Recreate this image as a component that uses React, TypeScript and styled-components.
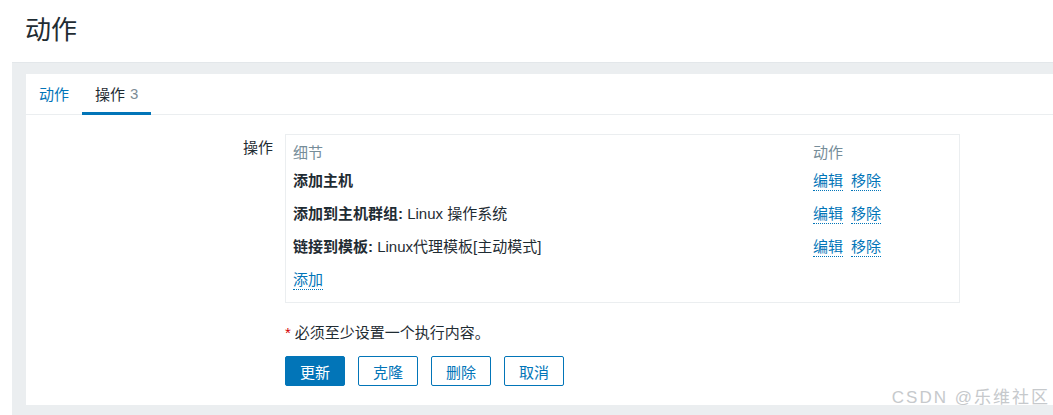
import React from "react";
import styled, { createGlobalStyle } from "styled-components";

const Global = createGlobalStyle`
  html, body { margin: 0; padding: 0; background: #ffffff; }
  body {
    font-family: "Liberation Sans", Arial, "Noto Sans CJK SC", sans-serif;
    color: #1f2c33;
    font-size: 15px;
    overflow: hidden;
  }
`;

const Page = styled.div`
  position: relative;
  width: 1053px;
  height: 415px;
  display: flex;
  flex-direction: column;
  overflow: hidden;
`;

const Header = styled.header`
  height: 62px;
  display: flex;
  align-items: center;
  padding-left: 25px;
  box-sizing: border-box;
`;

const Title = styled.h1`
  margin: 0;
  font-size: 26px;
  font-weight: normal;
  line-height: 30px;
  color: #1f2c33;
  padding-bottom: 2px;
`;

const Wrapper = styled.main`
  flex: 1;
  margin-left: 12px;
  background: #ebeef0;
  border-top: 1px solid #e3e7ea;
  padding: 11px 0 10px 14px;
  display: flex;
`;

const Card = styled.section`
  flex: 1;
  background: #ffffff;
  display: flex;
  flex-direction: column;
`;

const Tabs = styled.nav`
  display: flex;
  height: 40px;
  border-bottom: 1px solid #ebeef0;
`;

const Tab = styled.div<{ $active?: boolean }>`
  padding: 0 13px;
  display: flex;
  align-items: center;
  font-size: 15px;
  color: ${(p) => (p.$active ? "#1f2c33" : "#0275b8")};
  border-bottom: 3px solid ${(p) => (p.$active ? "#0275b8" : "transparent")};
  margin-bottom: -1px;
  padding-top: 1px;
  box-sizing: border-box;
`;

const Count = styled.span`
  color: #7c8c96;
  margin-left: 5px;
`;

const Form = styled.div`
  display: grid;
  grid-template-columns: 247px 675px;
  column-gap: 12px;
  padding-top: 19px;
`;

const Label = styled.div`
  text-align: right;
  font-size: 15px;
  line-height: 18px;
  padding-top: 5px;
`;

const Box = styled.div`
  border: 1px solid #ebeef0;
  padding: 5px 7px 7px;
`;

const Table = styled.table`
  width: 100%;
  border-collapse: collapse;
  font-size: 15px;
`;

const Th = styled.th`
  text-align: left;
  font-weight: normal;
  color: #768d99;
  height: 23px;
  padding: 0;
  vertical-align: middle;
`;

const Td = styled.td`
  height: 33px;
  padding: 0;
  vertical-align: middle;
  white-space: nowrap;
`;

const ActionCell = styled(Td)`
  width: 139px;
`;

const Strong = styled.b`
  font-weight: bold;
`;

const Link = styled.a`
  color: #0275b8;
  text-decoration: none;
  border-bottom: 1px dotted #0275b8;
  cursor: pointer;
  padding-bottom: 1px;
  & + & {
    margin-left: 8px;
  }
`;

const Note = styled.div`
  grid-column: 2;
  margin-top: 21px;
  font-size: 15px;
  line-height: 18px;
`;

const Star = styled.span`
  color: #d40000;
  margin-right: 4px;
`;

const Buttons = styled.div`
  grid-column: 2;
  margin-top: 14px;
  display: flex;
  gap: 13px;
`;

const Button = styled.button<{ $primary?: boolean }>`
  height: 30px;
  width: 60px;
  padding: 0;
  border-radius: 2px;
  border: 1px solid #0275b8;
  background: ${(p) => (p.$primary ? "#0275b8" : "#ffffff")};
  color: ${(p) => (p.$primary ? "#ffffff" : "#0275b8")};
  font-family: inherit;
  font-size: 15px;
  cursor: pointer;
`;

const Watermark = styled.div`
  position: absolute;
  right: 3px;
  bottom: 7px;
  font-size: 17px;
  color: #c6c9cc;
  text-shadow: 0 0 1px #ffffff;
  letter-spacing: 2px;
`;

const rows = [
  { head: "添加主机", rest: "" },
  { head: "添加到主机群组:", rest: " Linux 操作系统" },
  { head: "链接到模板:", rest: " Linux代理模板[主动模式]" },
];

export default function App() {
  return (
    <Page>
      <Global />
      <Header>
        <Title>动作</Title>
      </Header>
      <Wrapper>
        <Card>
          <Tabs>
            <Tab>动作</Tab>
            <Tab $active>
              操作<Count>3</Count>
            </Tab>
          </Tabs>
          <Form>
            <Label>操作</Label>
            <Box>
              <Table>
                <thead>
                  <tr>
                    <Th>细节</Th>
                    <Th>动作</Th>
                  </tr>
                </thead>
                <tbody>
                  {rows.map((r) => (
                    <tr key={r.head}>
                      <Td>
                        <Strong>{r.head}</Strong>
                        {r.rest}
                      </Td>
                      <ActionCell>
                        <Link>编辑</Link>
                        <Link>移除</Link>
                      </ActionCell>
                    </tr>
                  ))}
                  <tr>
                    <Td colSpan={2}>
                      <Link>添加</Link>
                    </Td>
                  </tr>
                </tbody>
              </Table>
            </Box>
            <Note>
              <Star>*</Star>必须至少设置一个执行内容。
            </Note>
            <Buttons>
              <Button $primary>更新</Button>
              <Button>克隆</Button>
              <Button>删除</Button>
              <Button>取消</Button>
            </Buttons>
          </Form>
        </Card>
      </Wrapper>
      <Watermark>CSDN @乐维社区</Watermark>
    </Page>
  );
}
